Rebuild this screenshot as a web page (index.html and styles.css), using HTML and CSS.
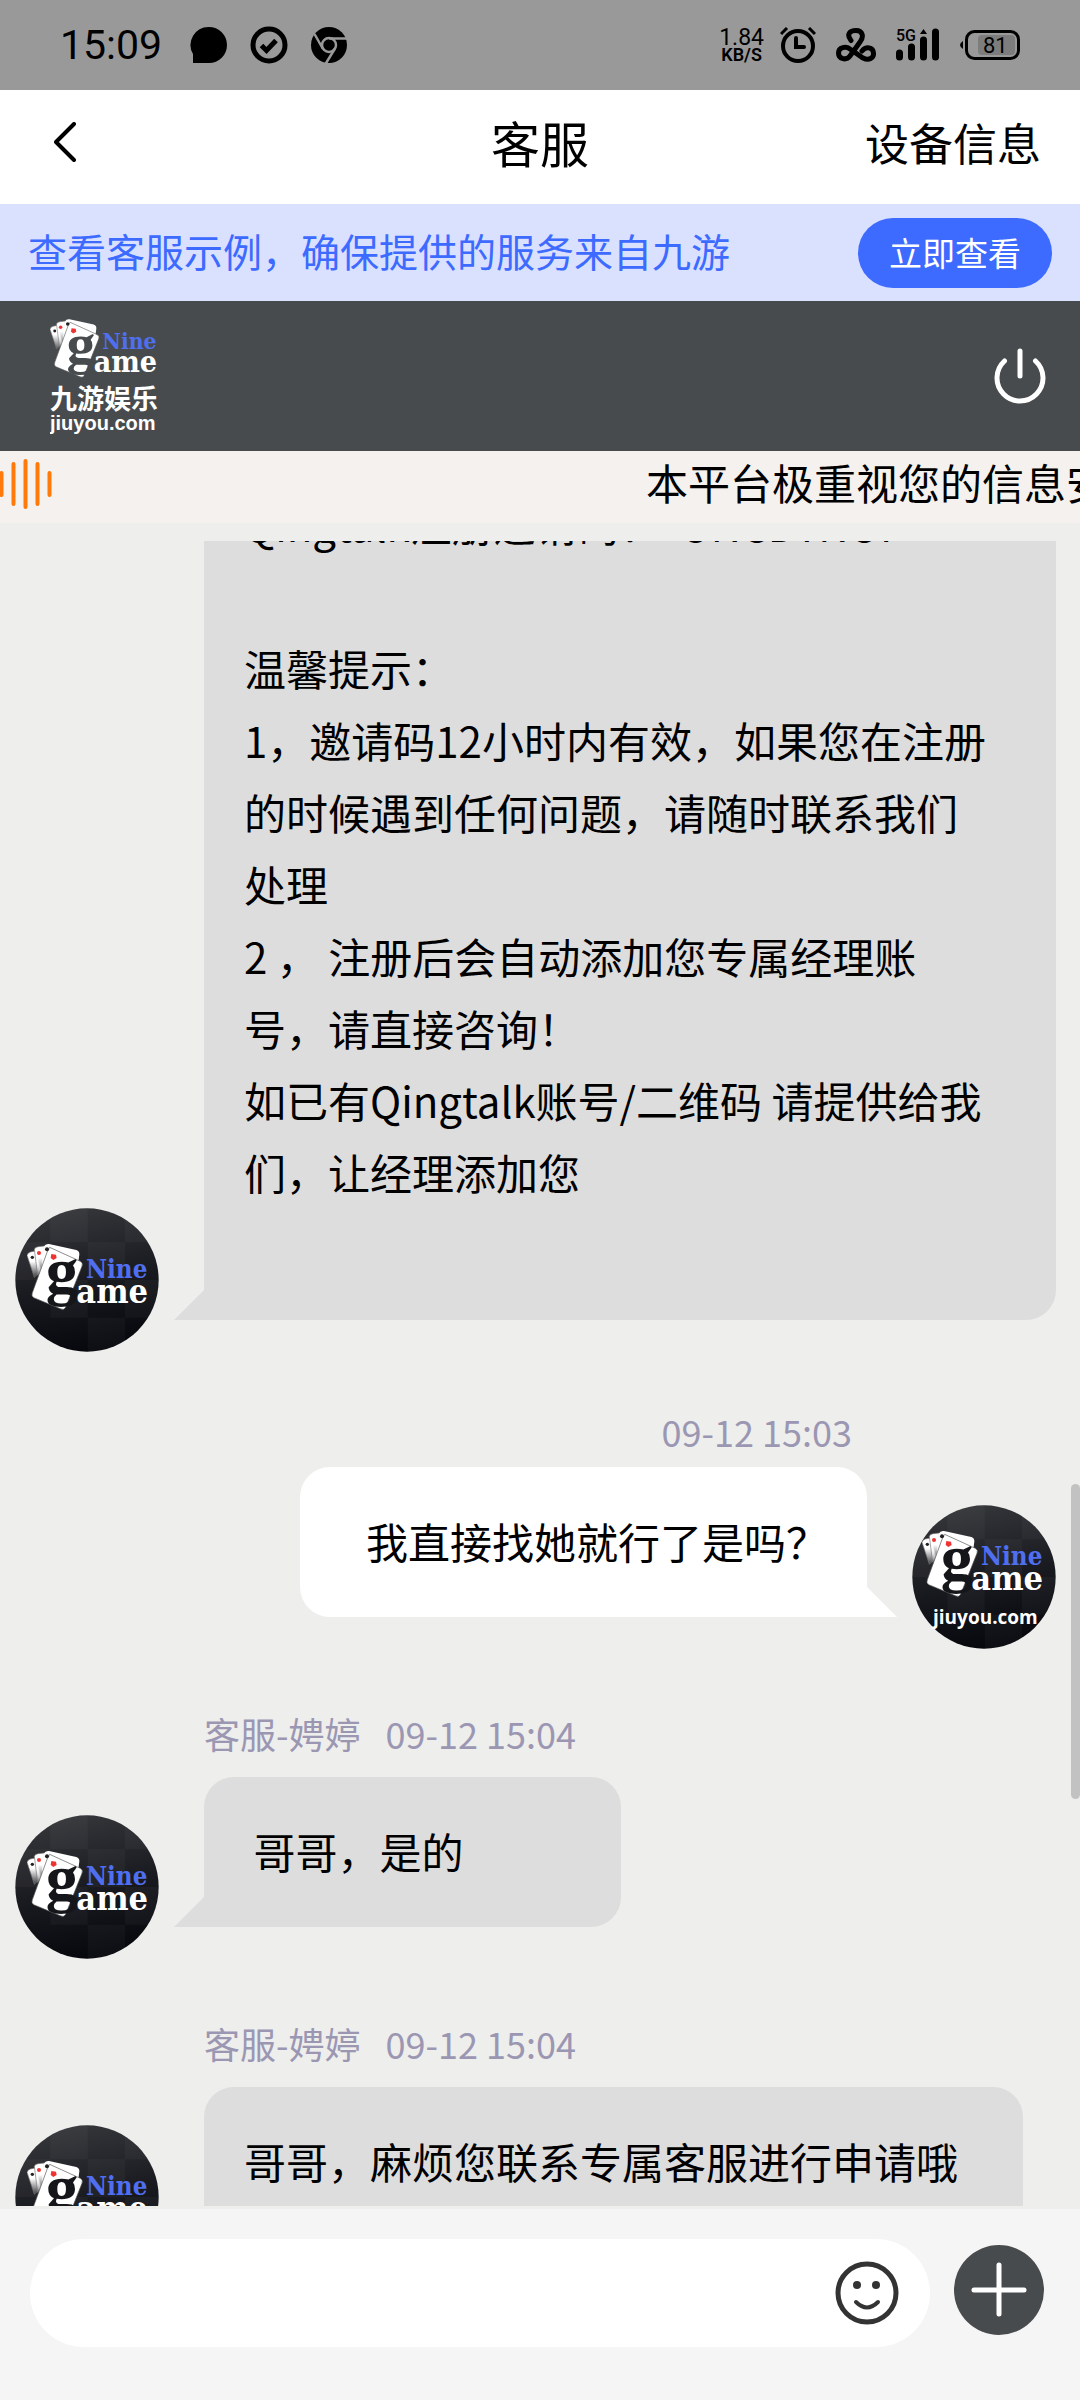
FILE: index.html
```html
<!DOCTYPE html>
<html lang="zh-CN">
<head>
<meta charset="utf-8">
<meta name="viewport" content="width=device-width, initial-scale=1">
<title>客服</title>
<link rel="stylesheet" href="styles.css">
</head>
<body>
<svg class="defs" aria-hidden="true">
  <defs>
    <linearGradient id="fan" x1="0" y1="0" x2="0" y2="1">
      <stop offset="0.4" stop-color="#fff"/>
      <stop offset="1" stop-color="#fff" stop-opacity="0.1"/>
    </linearGradient>
    <linearGradient id="disc" x1="0.4" y1="0" x2="0.6" y2="1">
      <stop offset="0" stop-color="#35363a"/>
      <stop offset="0.5" stop-color="#1a1b20"/>
      <stop offset="1" stop-color="#06070c"/>
    </linearGradient>
    <clipPath id="round"><circle cx="216" cy="216" r="215"/></clipPath>
    <!-- playing cards with the Nine game wordmark -->
    <symbol id="logo" viewBox="36 104 366 206">
      <path d="M36 142Q38 134 46 132L64 128 78 190 58 208Z" fill="url(#fan)" stroke="#777" stroke-width="2"/>
      <path d="M58 124Q60 117 70 116L88 114 88 180 68 202Z" fill="url(#fan)" stroke="#777" stroke-width="2"/>
      <path d="M86 116Q92 106 102 108L184 126Q194 130 193 140L186 190 80 180Z" fill="#fff"/>
      <path d="M104 118 196 160Q205 165 201 175L152 298Q148 307 138 303L56 269Q48 264 52 254L98 128Z" fill="#fff" stroke="#555" stroke-width="2"/>
      <circle cx="52" cy="148" r="5" fill="#222"/>
      <circle cx="72" cy="135" r="6" fill="#e33"/>
      <circle cx="96" cy="124" r="6" fill="#222"/>
      <path d="M109 138l14 2 2 10-10 6-8-6z" fill="#e33"/>
      <text class="logo-g" x="92" y="256" fill="currentColor">g</text>
      <text class="logo-nine" x="213" y="209" fill="#4f6ff0">Nine</text>
      <text class="logo-ame" x="184" y="285" fill="#fff">ame</text>
    </symbol>
    <symbol id="checker" viewBox="0 0 432 432">
      <g clip-path="url(#round)">
        <rect width="432" height="432" fill="url(#disc)"/>
        <path d="M106 0h112v103H106zM330 0h102v103H330zM218 103h112v113H218zM0 103h106v113H0zM106 216h112v113H106zM330 216h102v113H330zM218 329h112v103H218z" fill="#fff" fill-opacity="0.03"/>
      </g>
    </symbol>
  </defs>
</svg>

<div class="status">
  <span class="clock">15:09</span>
  <svg class="s-ico" viewBox="0 0 38 38" width="38" height="38"><path d="M19 1a18 18 0 1 1 0 36H3V28A18 18 0 0 1 19 1z"/></svg>
  <svg class="s-ico" viewBox="0 0 38 38" width="38" height="38"><circle cx="19" cy="19" r="16" fill="none" stroke="#000" stroke-width="5"/><path d="M11.500 19.500l5 5 9.500-10" fill="none" stroke="#000" stroke-width="5"/></svg>
  <svg class="s-ico" viewBox="0 0 38 38" width="38" height="38"><circle cx="19" cy="19" r="18"/><g fill="none" stroke="#999" stroke-width="2.500"><circle cx="19" cy="19" r="7"/><path d="M19 12.500h18M13 23L4.500 8M25 22.500L15.500 38"/></g></svg>
  <span class="spacer"></span>
  <span class="speed"><span class="rate">1.84</span><span class="unit">KB/S</span></span>
  <svg viewBox="0 0 36 36" width="36" height="36"><circle cx="18" cy="19" r="15" fill="none" stroke="#000" stroke-width="4"/><path d="M16 11v9h8" fill="none" stroke="#000" stroke-width="4" stroke-linecap="round"/><path d="M1 7L7 1M35 7L29 1" stroke="#000" stroke-width="3"/></svg>
  <svg viewBox="0 0 40 34" width="40" height="34"><path d="M15 12.500C10 6 14 2.500 20 2.500C27 2.500 28 9 24 14L14 28C10 33 2.500 31 2.500 25C2.500 19 10 18 14 21L27 30C33 33 38 30 37.500 25C37 19 30 18 26 23" fill="none" stroke="#000" stroke-width="5" stroke-linecap="round"/></svg>
  <svg class="signal" viewBox="0 0 44 34" width="44" height="34"><text class="net" x="0" y="13">5G</text><path d="M3.500 25v4M15.500 19v10M27.500 12v17M39.500 4v25" stroke="#000" stroke-width="7" stroke-linecap="round"/><path d="M24 6l3.500-5 3.500 5z"/></svg>
  <svg viewBox="0 0 60 32" width="60" height="32"><rect x="6.500" y="2.500" width="52" height="27" rx="8" fill="none" stroke="#000" stroke-width="3"/><rect x="18" y="6" width="37" height="20" rx="4" fill="#7d7d7d"/><path d="M3 12v8q-6-4 0-8z"/><text class="level" x="23" y="24">81</text></svg>
</div>

<header class="titlebar">
  <button class="back" aria-label="返回"><svg viewBox="0 0 22 40" width="22" height="40"><path d="M20 2L2 20l18 18" fill="none" stroke="#000" stroke-width="4" stroke-linecap="round" stroke-linejoin="round"/></svg></button>
  <h1>客服</h1>
  <a class="device" href="#">设备信息</a>
</header>

<div class="notice">
  <span class="notice-text">查看客服示例，确保提供的服务来自九游</span>
  <button class="check">立即查看</button>
</div>

<div class="brand">
  <svg class="brand-logo" viewBox="0 0 108 120" width="108" height="120">
    <use href="#logo" x="0" y="2" width="108" height="61"/>
    <text class="brand-cn" x="0" y="93">九游娱乐</text>
    <text class="brand-url" x="0" y="114">jiuyou.com</text>
  </svg>
  <button class="power" aria-label="退出"><svg viewBox="0 0 52 56" width="52" height="56"><path d="M26 3v25M10.500 13A23 23 0 1 0 41.500 13" fill="none" stroke="#fff" stroke-width="5" stroke-linecap="round"/></svg></button>
</div>

<div class="marquee">
  <svg viewBox="0 0 52 50" width="52" height="50"><path d="M1.500 14v22M13.500 5v40M25.500 2v46M37.500 5v40M49.500 14v22" fill="none" stroke="#ff7a0a" stroke-width="4" stroke-linecap="round"/></svg>
  <span class="marquee-text">本平台极重视您的信息安全</span>
</div>

<div class="stage">
<main class="chat">
  <article class="msg">
    <svg class="avatar" viewBox="0 0 432 432"><use href="#checker"/><use href="#logo" x="36" y="104" width="366" height="206"/></svg>
    <div class="body">
      <p class="bubble cut">Qingtalk注册邀请码：&nbsp; UNCDYNCY<br><br>温馨提示：<br>1，邀请码12小时内有效，如果您在注册的时候遇到任何问题，请随时联系我们处理<br>2 ， 注册后会自动添加您专属经理账号，请直接咨询！<br>如已有Qingtalk账号/二维码 请提供给我们，让经理添加您<br><br></p>
    </div>
  </article>

  <article class="msg own">
    <div class="body">
      <div class="meta"><time>09-12 15:03</time></div>
      <p class="bubble">我直接找她就行了是吗？</p>
    </div>
    <svg class="avatar" viewBox="0 0 432 432"><use href="#checker"/><use href="#logo" x="30" y="74" width="366" height="206"/><text class="avatar-url" x="63" y="356">jiuyou.com</text></svg>
  </article>

  <article class="msg">
    <svg class="avatar" viewBox="0 0 432 432"><use href="#checker"/><use href="#logo" x="36" y="104" width="366" height="206"/></svg>
    <div class="body">
      <div class="meta"><span>客服-娉婷</span><time>09-12 15:04</time></div>
      <p class="bubble">&nbsp;哥哥，是的</p>
    </div>
  </article>

  <article class="msg">
    <svg class="avatar" viewBox="0 0 432 432"><use href="#checker"/><use href="#logo" x="36" y="104" width="366" height="206"/></svg>
    <div class="body">
      <div class="meta"><span>客服-娉婷</span><time>09-12 15:04</time></div>
      <p class="bubble">哥哥，麻烦您联系专属客服进行申请哦</p>
    </div>
  </article>
</main>
<span class="thumb"></span>
</div>

<footer class="composer">
  <div class="field">
    <input type="text" aria-label="输入消息">
    <button class="emoji" aria-label="表情"><svg viewBox="0 0 64 64" width="64" height="64"><circle cx="32" cy="32" r="29" fill="none" stroke="#333" stroke-width="5"/><circle cx="22" cy="24" r="4" fill="#333"/><circle cx="41" cy="24" r="4" fill="#333"/><path d="M21 41q11 11 22 0" fill="none" stroke="#333" stroke-width="4" stroke-linecap="round"/></svg></button>
  </div>
  <button class="more" aria-label="更多"><svg viewBox="0 0 90 90" width="90" height="90"><path d="M45 20v49M20 45h50" stroke="#fff" stroke-width="5" stroke-linecap="round"/></svg></button>
</footer>
</body>
</html>
```
FILE: styles.css
```css
* {
  box-sizing: border-box;
}

body {
  margin: 0;
  height: 100vh;
  display: flex;
  flex-direction: column;
  overflow: hidden;
  background: #eeeeec;
  color: #000;
  font-family: "Noto Sans CJK SC", "Noto Sans", sans-serif;
  font-size: 42px;
}

button {
  padding: 0;
  border: 0;
  background: none;
  font: inherit;
  color: inherit;
  cursor: pointer;
}

svg {
  display: block;
  flex: none;
}

.defs {
  position: absolute;
  width: 0;
  height: 0;
}

/* status bar */
.status {
  flex: none;
  display: flex;
  align-items: center;
  gap: 20px;
  height: 90px;
  padding: 0 60px;
  background: #999;
  font-family: Roboto, sans-serif;
}

.clock {
  margin-right: 8px;
  font-size: 41px;
}

.s-ico {
  margin-right: 2px;
}

.spacer {
  flex: 1;
}

.speed {
  display: flex;
  flex-direction: column;
  align-items: center;
  margin-right: -4px;
}

.rate {
  font-size: 23px;
  line-height: 19px;
}

.unit {
  font-size: 18px;
  font-weight: 600;
  line-height: 16px;
}

.signal {
  overflow: visible;
}

.net {
  font-size: 16px;
  font-weight: 500;
}

.level {
  font-size: 22px;
}

/* title bar */
.titlebar {
  flex: none;
  display: grid;
  grid-template-columns: 1fr auto 1fr;
  align-items: center;
  height: 114px;
  padding: 0 39px 10px 54px;
  background: #fff;
}

.back {
  justify-self: start;
}

.titlebar h1 {
  margin: 0 15px 0 0;
  font-size: 49px;
  font-weight: 400;
  line-height: 72px;
}

.device {
  justify-self: end;
  color: inherit;
  font-size: 44px;
  line-height: 72px;
  text-decoration: none;
}

/* notice strip */
.notice {
  flex: none;
  display: flex;
  align-items: center;
  justify-content: space-between;
  height: 97px;
  padding: 0 28px;
  background: #d9e1ff;
  color: #3d6aff;
  font-size: 39px;
}

.notice-text {
  padding-bottom: 5px;
}

.check {
  width: 194px;
  height: 70px;
  padding-bottom: 2px;
  border-radius: 35px;
  background: #3d6aff;
  color: #fff;
  font-size: 33px;
  line-height: 68px;
}

/* brand header */
.brand {
  flex: none;
  display: flex;
  align-items: center;
  justify-content: space-between;
  height: 150px;
  padding: 0 34px 0 50px;
  background: #484b4d;
  color: #484b4d;
}

.logo-g {
  font-family: "Liberation Serif", serif;
  font-size: 196px;
  font-weight: 700;
}

.logo-nine,
.logo-ame {
  font-family: "DejaVu Serif Condensed", "DejaVu Serif", serif;
  font-weight: 700;
}

.logo-nine {
  font-size: 77px;
}

.logo-ame {
  font-size: 102px;
}

.brand-cn,
.brand-url {
  fill: #fff;
  font-weight: 700;
}

.brand-cn {
  font-size: 27px;
}

.brand-url {
  font-family: "Liberation Sans", sans-serif;
  font-size: 20px;
}

/* scrolling announcement */
.marquee {
  flex: none;
  display: flex;
  align-items: center;
  height: 72px;
  padding-bottom: 6px;
  overflow: hidden;
  background: #f5f1ee;
}

.marquee-text {
  margin-left: 55%;
  padding-bottom: 5px;
  white-space: nowrap;
  line-height: 61px;
}

/* conversation */
.stage {
  position: relative;
  flex: 1;
  min-height: 0;
  display: flex;
  padding: 18px 0 3px;
}

.chat {
  flex: 1;
  display: flex;
  flex-direction: column;
  gap: 59px;
  padding: 0 24px 0 15px;
  overflow: hidden;
}

.msg {
  flex: none;
  display: flex;
  align-items: flex-end;
  gap: 45px;
}

/* the list is scrolled part way into its first message */
.msg:first-child {
  margin-top: -53px;
}

.own {
  justify-content: flex-end;
}

.avatar {
  width: 144px;
  height: 144px;
  color: #15161a;
}

.avatar-url {
  fill: #fff;
  font-family: "Open Sans", sans-serif;
  font-size: 57px;
  font-weight: 700;
}

.body {
  display: flex;
  flex-direction: column;
  align-items: flex-start;
  min-width: 0;
  padding-bottom: 32px;
}

.own .body {
  align-items: flex-end;
}

.meta {
  display: flex;
  gap: 25px;
  margin-bottom: 19px;
  color: #9b97b3;
  font-size: 36px;
  line-height: 50px;
}

.own .meta {
  margin-bottom: 16px;
  padding-right: 15px;
  line-height: 40px;
}

.bubble {
  position: relative;
  min-width: 417px;
  margin: 0;
  padding: 38px 65px 40px 40px;
  border-radius: 30px 30px 30px 0;
  background: #ddd;
  line-height: 72px;
}

.bubble.cut {
  padding-top: 0;
  border-radius: 0 0 30px 0;
}

.bubble::after {
  content: "";
  position: absolute;
  left: -30px;
  bottom: 0;
  width: 30px;
  height: 30px;
  background: inherit;
  clip-path: polygon(100% 0, 100% 100%, 0 100%);
}

.own .bubble {
  padding: 38px 39px 40px 66px;
  border-radius: 30px 30px 0 30px;
  background: #fff;
}

.own .bubble::after {
  left: auto;
  right: -30px;
  clip-path: polygon(0 0, 100% 100%, 0 100%);
}

.thumb {
  position: absolute;
  right: 0;
  top: 57%;
  width: 9px;
  height: 315px;
  border-radius: 5px;
  background: #c2c2c2;
}

/* composer */
.composer {
  flex: none;
  display: flex;
  gap: 24px;
  padding: 30px 36px 53px 30px;
  background: #f5f5f5;
}

.field {
  flex: 1;
  display: flex;
  align-items: center;
  height: 108px;
  padding: 0 31px 0 40px;
  border-radius: 54px;
  background: #fff;
}

.field input {
  flex: 1;
  min-width: 0;
  height: 72px;
  border: 0;
  outline: 0;
  background: none;
  font: inherit;
}

.more {
  width: 90px;
  height: 90px;
  margin-top: 6px;
  border-radius: 50%;
  background: #484b4d;
}
```
